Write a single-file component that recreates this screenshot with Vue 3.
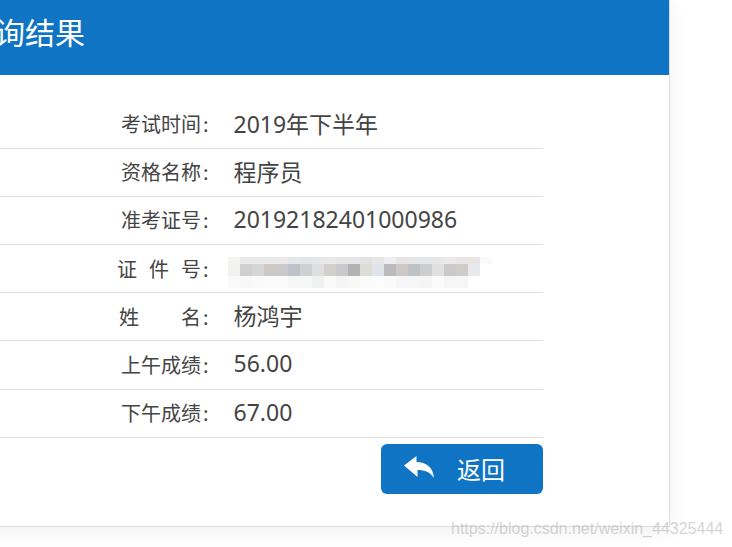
<script setup>
// Score rows, top to bottom
const rows = [
  { head: '', tail: '考试时间', value: '2019年下半年' },
  { head: '', tail: '资格名称', value: '程序员' },
  { head: '', tail: '准考证号', value: '20192182401000986' },
  { head: '证件', tail: '号', gap: 'gap-small', masked: true },
  { head: '姓', tail: '名', gap: 'gap-large', value: '杨鸿宇' },
  { head: '', tail: '上午成绩', value: '56.00' },
  { head: '', tail: '下午成绩', value: '67.00' }
]

// Mosaic over the ID number, one list per pixel row
const mosaic = [
  ['#f5f4f2', '#e9e9ea', '#e9e9e9', '#eaeaea', '#ebeae8', '#e6e7ea', '#e4e5e9', '#e7e7e8', '#e9e9eb', '#e8e6e4', '#e6e6e8', '#e3e3e3', '#e8e7e5', '#eceef1', '#e6e5e6', '#e8e6e4', '#e5e6e7', '#e6e7e7', '#eaeaeb', '#e6e6e6', '#e8e7e5', '#fafbfc'],
  ['#f2f2f0', '#cfcfd0', '#d5d5d5', '#cdc8c4', '#c9c9cb', '#bfc2c8', '#cfd0d0', '#dedfe0', '#d3d0cc', '#c9cace', '#b2b2b2', '#dedcd7', '#dfe3ea', '#bcb9bc', '#cdc8c5', '#bfc2c5', '#cccecd', '#e0e0e2', '#c9c9c9', '#cfccc8', '#e6eaef', '#ffffff'],
  ['#f9f9f9', '#f8f8f8', '#f9f9f9', '#fafbfa', '#fbfbfb', '#f6f6f6', '#f6f6f6', '#eff1f0', '#fafafa', '#f5f5f5', '#f8f8f7', '#fbfbfb', '#fcfcfc', '#fafafa', '#f6f6f6', '#f6f6f6', '#f5f5f5', '#fbfbfb', '#f6f6f6', '#f6f6f6', '#ffffff', '#ffffff']
]
</script>

<template>
  <div class="page">
    <div class="card">
      <div class="card-title">查询结果</div>
      <div class="card-body">
        <div v-for="(row, i) in rows" :key="i" class="row">
          <div class="label"><span :class="row.gap">{{ row.head }}</span>{{ row.tail }}<span class="colon">:</span></div>
          <div v-if="row.masked" class="mosaic">
            <div v-for="(line, y) in mosaic" :key="y" class="mosaic-line">
              <span
                v-for="(color, x) in line"
                :key="x"
                class="mosaic-cell"
                :style="{ backgroundColor: color }"
              ></span>
            </div>
          </div>
          <div v-else class="value">{{ row.value }}</div>
        </div>
        <div class="actions">
          <button class="back-btn" type="button">
            <svg class="back-icon" width="30" height="22" viewBox="0 0 30 22">
              <path d="M0 9.5 L12.5 0 V6 C22 6 29 11 30 22 C26 16 21 14 13.5 14 V21 Z" fill="#fff" />
            </svg>
            <span>返回</span>
          </button>
        </div>
      </div>
    </div>
    <div class="watermark">https://blog.csdn.net/weixin_44325444</div>
  </div>
</template>

<style scoped>
.page {
  position: relative;
  width: 732px;
  height: 547px;
  overflow: hidden;
  font-family: "Noto Sans CJK SC", "Noto Sans", sans-serif;
  color: #444;
}

.card {
  width: 705px;
  height: 527px;
  margin-left: -35px;
  box-sizing: border-box;
  border-right: 1px solid #ddd;
  border-bottom: 1px solid #ddd;
  box-shadow: 0 4px 20px rgba(0, 0, 0, 0.06);
  background: #fff;
}

.card-title {
  height: 75px;
  line-height: 63px;
  background: #1074c4;
  color: #fff;
  font-size: 30px;
}

.card-body {
  padding: 25.6px 126px 0 0;
}

.row {
  display: flex;
  align-items: center;
  height: 48.17px;
  box-sizing: border-box;
  border-bottom: 1px solid #ddd;
}

.label {
  width: 243.5px;
  margin-bottom: 1px;
  text-align: right;
  font-size: 20px;
  white-space: nowrap;
}

.colon {
  margin-left: 2px;
}

.gap-small {
  letter-spacing: 12px;
}

.gap-large {
  letter-spacing: 42px;
}

.value {
  margin-left: 25px;
  margin-bottom: 3px;
  font-family: "Noto Sans", "Noto Sans CJK SC", sans-serif;
  font-size: 23px;
}

.mosaic {
  align-self: flex-start;
  margin-top: 12px;
  margin-left: 19.5px;
}

.mosaic-line {
  display: flex;
}

.mosaic-line:first-child .mosaic-cell {
  height: 7px;
}

.mosaic-cell {
  width: 12px;
  height: 12px;
}

.actions {
  display: flex;
  justify-content: flex-end;
  margin-top: 6px;
}

.back-btn {
  display: flex;
  align-items: center;
  width: 162px;
  height: 50px;
  padding: 0 0 0 23px;
  border: none;
  border-radius: 6px;
  background: #1074c4;
  color: #fff;
  font-family: inherit;
  font-size: 24px;
}

.back-icon {
  margin-right: 23px;
  margin-top: -3px;
}

.watermark {
  position: absolute;
  left: 451px;
  top: 520px;
  font-family: "Liberation Sans", sans-serif;
  font-size: 16px;
  color: rgba(170, 170, 170, 0.5);
  white-space: nowrap;
}
</style>
